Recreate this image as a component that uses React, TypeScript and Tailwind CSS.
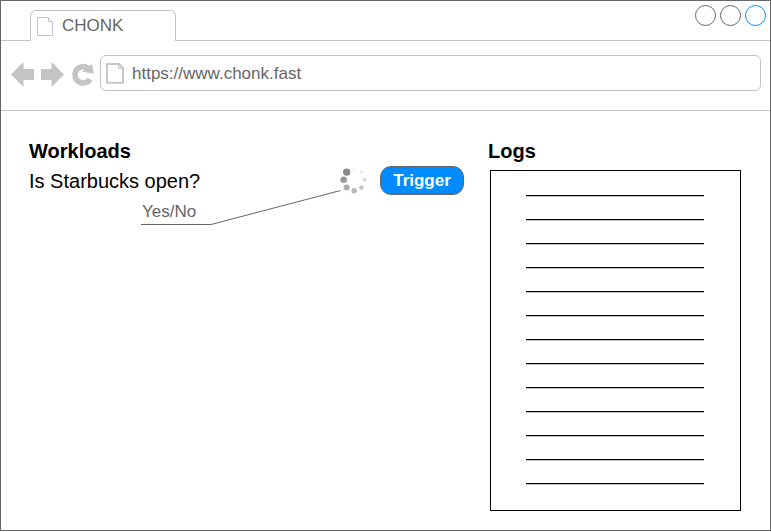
import React from "react";

const logLines = Array.from({ length: 13 }, (_, i) => i);

function TabStrip() {
  return (
    <div className="flex h-10 shrink-0">
      <div className="w-[29px] border-b border-[#c4c4c4]" />
      <div className="mt-[9px] flex w-[146px] items-start rounded-t-[6px] border border-b-0 border-[#c4c4c4] pl-[5px]">
        <svg className="mt-[5px] h-[21px] w-[18px]" viewBox="0 0 18 21" fill="none" stroke="#c4c4c4">
          <path d="M1.5 1.5H12L16.5 6V19.5H1.5Z" />
          <path d="M12.5 1.5V5.5H16.5" />
        </svg>
        <span className="ml-[8px] mt-[5px] text-[17px] leading-5">CHONK</span>
      </div>
      <div className="flex flex-1 justify-end gap-1 border-b border-[#c4c4c4] pr-[4px] pt-[4px]">
        <div className="size-[21px] rounded-full border border-[#666]" />
        <div className="size-[21px] rounded-full border border-[#666]" />
        <div className="size-[21px] rounded-full border border-[#008cff]" />
      </div>
    </div>
  );
}

function Toolbar() {
  return (
    <div className="flex h-[70px] shrink-0 items-start border-b border-[#c4c4c4] pt-[14px]">
      <svg className="h-9 w-[99px] shrink-0" viewBox="1 55 99 36" fill="#c4c4c4">
        <path d="M11 74.5L23.5 62V69H34V80H23.5V87Z" />
        <path d="M64 74.5L51.5 62V69H41V80H51.5V87Z" />
        <path
          d="M90.1 79.2A8.2 8.2 0 1 1 88.2 68.3"
          fill="none"
          stroke="#c4c4c4"
          strokeWidth="5.6"
        />
        <path d="M81.8 71.4L92 64L93.8 73.8Z" />
      </svg>
      <div className="flex h-9 w-[661px] items-start rounded-[6px] border border-[#c4c4c4] pl-[5px] pt-[7px]">
        <svg className="h-[21px] w-[18px]" viewBox="0 0 18 21" fill="none" stroke="#c8c8c8">
          <path d="M1 1H13L17 5V19.8H1Z" strokeWidth="2" />
          <path d="M12.7 1V5.3H17" strokeWidth="1.3" />
        </svg>
        <span className="ml-[8px] mt-px text-[17px] leading-5">https://www.chonk.fast</span>
      </div>
    </div>
  );
}

function Spinner() {
  return (
    <svg className="mt-[2px] h-[30px] w-[30px]" viewBox="339 165 30 30">
      <circle cx="346.7" cy="172.2" r="3.6" fill="#888" />
      <circle cx="343.7" cy="179.8" r="3.3" fill="#999" />
      <circle cx="346.7" cy="187.6" r="3" fill="#aaa" />
      <circle cx="354.1" cy="190.7" r="2.7" fill="#b8b8b8" />
      <circle cx="361.5" cy="187.6" r="2.4" fill="#c8c8c8" />
      <circle cx="364.5" cy="179.8" r="2" fill="#d8d8d8" />
      <circle cx="361.5" cy="172.2" r="1.7" fill="#eaeaea" />
      <circle cx="354.1" cy="169.2" r="1.4" fill="#f2f2f2" />
    </svg>
  );
}

function Workloads() {
  return (
    <section className="w-[459px] shrink-0">
      <h2 className="text-xl font-bold leading-6 text-black">Workloads</h2>
      <div className="flex h-[30px] items-start">
        <span className="w-[310px] pt-[6px] text-xl leading-6 text-black">Is Starbucks open?</span>
        <Spinner />
        <button className="ml-[11px] mt-[3px] h-[29px] w-[84px] rounded-[11px] border border-[#666] bg-[#008cff] text-[17px] font-bold leading-[27px] text-white">
          Trigger
        </button>
      </div>
      <div className="ml-[112px] mt-[9px] h-5 w-[70px] pl-px text-[17px] leading-5">Yes/No</div>
      <svg className="-mt-[33px] ml-[112px] h-[38px] w-[202px]" viewBox="141 189 202 38" fill="none" stroke="#666">
        <path d="M141 224.5H211L340.5 190.5" />
      </svg>
    </section>
  );
}

function Logs() {
  return (
    <section>
      <h2 className="text-xl font-bold leading-6 text-black">Logs</h2>
      <div className="ml-[2px] mt-[7px] flex h-[341px] w-[251px] flex-col gap-[22px] border border-black px-[35px] pt-6">
        {logLines.map((line) => (
          <div key={line} className="h-[2px] w-[178px] shrink-0 border-b border-[#c0c0c0] bg-black" />
        ))}
      </div>
    </section>
  );
}

export default function App() {
  return (
    <div className="flex h-[531px] w-[771px] flex-col border border-[#666] bg-white font-['Liberation_Sans',Arial,sans-serif] text-[#666]">
      <TabStrip />
      <Toolbar />
      <main className="flex pl-[28px] pt-[28px]">
        <Workloads />
        <Logs />
      </main>
    </div>
  );
}
